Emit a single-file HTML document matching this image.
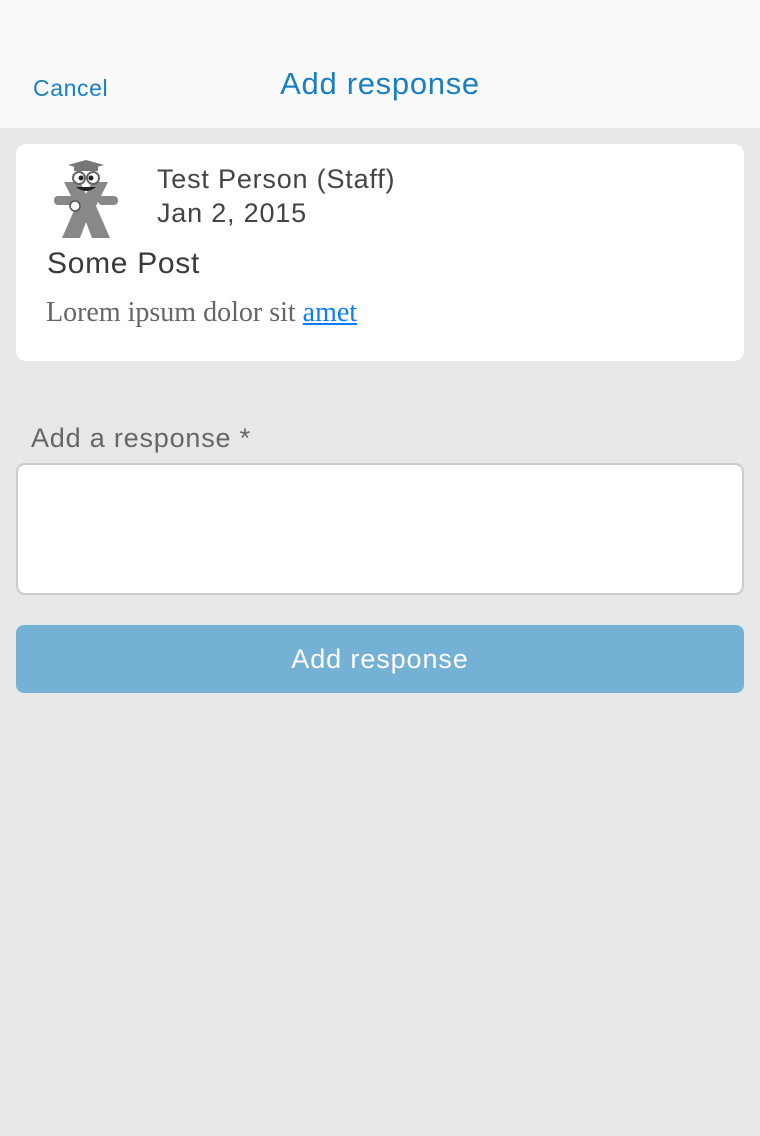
<!DOCTYPE html>
<html><head><meta charset="utf-8"><style>
*{margin:0;padding:0;box-sizing:border-box}
body{width:760px;height:1136px;background:#e8e8e8;font-family:"Liberation Sans",sans-serif;position:relative;overflow:hidden}
.hdr{position:absolute;left:0;top:0;width:760px;height:128px;background:#fafafa}
.cancel{position:absolute;left:33px;top:75px;font-size:23px;letter-spacing:0.6px;color:#1a7fc1}
.title{position:absolute;left:0;width:760px;text-align:center;top:66px;font-size:31px;letter-spacing:0.7px;color:#1a7fc1}
.card{position:absolute;left:16px;top:144px;width:728px;height:217px;background:#fff;border-radius:10px}
.name{position:absolute;left:141px;top:18px;font-size:27px;letter-spacing:0.8px;color:#444;line-height:34px}
.post{position:absolute;left:31px;top:103px;font-size:30px;letter-spacing:0.7px;color:#3a3a3a}
.body{position:absolute;left:30px;top:153px;font-family:"Liberation Serif",serif;font-size:28px;color:#666}
.body a{color:#0a7cff;text-decoration:underline}
.lbl{position:absolute;left:31px;top:423px;font-size:27px;letter-spacing:0.8px;color:#666}
.ta{position:absolute;left:16px;top:463px;width:728px;height:132px;background:#fff;border:2px solid #ccc;border-radius:9px}
.btn{position:absolute;left:16px;top:625px;width:728px;height:68px;background:#75b1d5;border-radius:8px;color:#fff;font-size:27px;letter-spacing:0.9px;text-align:center;line-height:68px}
</style></head><body>
<div class="hdr"><div class="cancel">Cancel</div><div class="title">Add response</div></div>
<div class="card">
<svg style="position:absolute;left:34px;top:16px" width="72" height="80" viewBox="0 0 72 80">
<path d="M14 22h16l6 12 6-12h16l-12 24 14 32h-18l-6-16-6 16h-18l14-32z" fill="#888"/>
<rect x="4" y="36" width="20" height="9" rx="4" fill="#888"/><rect x="48" y="36" width="20" height="9" rx="4" fill="#888"/>
<path d="M18 5l18-5 18 5-18 5z" fill="#777"/><rect x="24" y="5" width="24" height="6" fill="#777"/>
<circle cx="29" cy="18" r="6" fill="#fff" stroke="#666" stroke-width="2"/><circle cx="43" cy="18" r="6" fill="#fff" stroke="#666" stroke-width="2"/>
<circle cx="31" cy="18" r="2.5" fill="#222"/><circle cx="41" cy="18" r="2.5" fill="#222"/>
<path d="M26 27q10 8 20 0z" fill="#222"/>
<circle cx="25" cy="46" r="5" fill="#fff" stroke="#555" stroke-width="1.5"/>
</svg>
<div class="name">Test Person (Staff)<br>Jan 2, 2015</div>
<div class="post">Some Post</div>
<div class="body">Lorem ipsum dolor sit <a>amet</a></div>
</div>
<div class="lbl">Add a response *</div>
<div class="ta"></div>
<div class="btn">Add response</div>
</body></html>
